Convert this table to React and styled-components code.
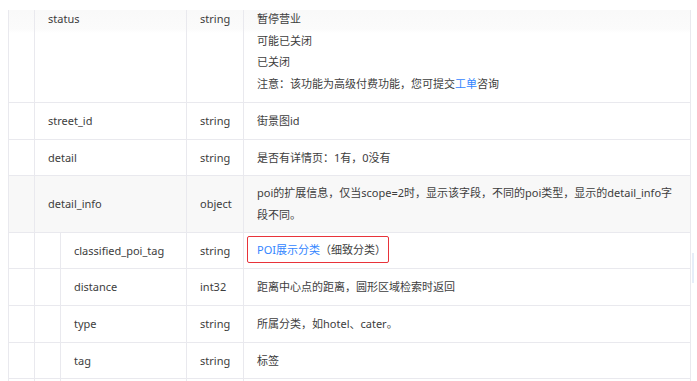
import styled, { createGlobalStyle } from "styled-components";

const GlobalStyle = createGlobalStyle`
  html, body {
    margin: 0;
    padding: 0;
    background: #fff;
  }
  body {
    font-family: "Noto Sans", "Noto Sans CJK SC", sans-serif;
    overflow: hidden;
  }
`;

const Page = styled.div`
  position: relative;
  width: 697px;
  height: 381px;
  overflow: hidden;
  padding-left: 8px;
  box-sizing: border-box;
`;

// white strip that hides the top of the status row (page header edge)
const TopCover = styled.div`
  position: absolute;
  left: 0;
  top: 0;
  width: 100%;
  height: 10px;
  background: #fff;
`;

const ScrollThumb = styled.div`
  position: absolute;
  left: 692px;
  top: 253px;
  width: 2px;
  height: 30px;
  background: #e6edf8;
`;

const Table = styled.table`
  width: 683px;
  table-layout: fixed;
  border-collapse: collapse;
  font-size: 11px;
  color: #3d3d3d;
  border-left: 1px solid #ececf0;
  border-right: 1px solid #e6e6ea;
`;

const Row = styled.tr`
  background: ${({ $shade }) => ($shade ? "#f8f8f8" : "#fff")};
  ${({ $fade }) =>
    $fade && "background: linear-gradient(#f9f9f9 10px, #fbfbfb 28px, #fff 32px);"}
`;

const Cell = styled.td`
  border: 1px solid #e9e9ee;
  padding: ${({ $tight }) => ($tight ? "6px 13px" : "7px 13px")};
  line-height: 21.7px;
  vertical-align: ${({ $top }) => ($top ? "top" : "middle")};
  white-space: ${({ $nowrap }) => ($nowrap ? "nowrap" : "normal")};
  overflow: hidden;
`;

const Line = styled.div``;

const Link = styled.span`
  color: #3385ff;
`;

// red highlight frame drawn round the text, not changing the row height
const Marked = styled.span`
  display: inline-block;
  vertical-align: top;
  margin: -3.5px 0 -3.5px -10px;
  padding: 1.7px 2px 1.7px 9px;
  line-height: 21.7px;
  border: 1.5px solid #e8333a;
  border-radius: 2px;
`;

const fields = [
  { name: "street_id", type: "string", desc: "街景图id" },
  { name: "detail", type: "string", desc: "是否有详情页：1有，0没有" },
];

const children = [
  { name: "distance", type: "int32", desc: "距离中心点的距离，圆形区域检索时返回" },
  { name: "type", type: "string", desc: "所属分类，如hotel、cater。" },
  { name: "tag", type: "string", desc: "标签" },
];

export default function App() {
  return (
    <Page>
      <GlobalStyle />
      <Table>
        <colgroup>
          <col style={{ width: 26 }} />
          <col style={{ width: 26 }} />
          <col style={{ width: 126 }} />
          <col style={{ width: 57 }} />
          <col />
        </colgroup>
        <tbody>
          <Row $fade>
            <Cell />
            <Cell colSpan={2} $top>status</Cell>
            <Cell $top $nowrap>string</Cell>
            <Cell>
              <Line>暂停营业</Line>
              <Line>可能已关闭</Line>
              <Line>已关闭</Line>
              <Line>
                注意：该功能为高级付费功能，您可提交<Link>工单</Link>咨询
              </Line>
            </Cell>
          </Row>
          {fields.map((f) => (
            <Row key={f.name}>
              <Cell />
              <Cell colSpan={2}>{f.name}</Cell>
              <Cell $nowrap>{f.type}</Cell>
              <Cell>{f.desc}</Cell>
            </Row>
          ))}
          <Row $shade>
            <Cell />
            <Cell colSpan={2}>detail_info</Cell>
            <Cell $nowrap>object</Cell>
            <Cell $tight>
              poi的扩展信息，仅当scope=2时，显示该字段，不同的poi类型，显示的detail_info字段不同。
            </Cell>
          </Row>
          <Row>
            <Cell />
            <Cell />
            <Cell $nowrap>classified_poi_tag</Cell>
            <Cell $nowrap>string</Cell>
            <Cell>
              <Marked>
                <Link>POI展示分类</Link>（细致分类）
              </Marked>
            </Cell>
          </Row>
          {children.map((f) => (
            <Row key={f.name}>
              <Cell />
              <Cell />
              <Cell>{f.name}</Cell>
              <Cell $nowrap>{f.type}</Cell>
              <Cell>{f.desc}</Cell>
            </Row>
          ))}
          <Row>
            <Cell />
            <Cell />
            <Cell>&nbsp;</Cell>
            <Cell />
            <Cell />
          </Row>
        </tbody>
      </Table>
      <TopCover />
      <ScrollThumb />
    </Page>
  );
}
